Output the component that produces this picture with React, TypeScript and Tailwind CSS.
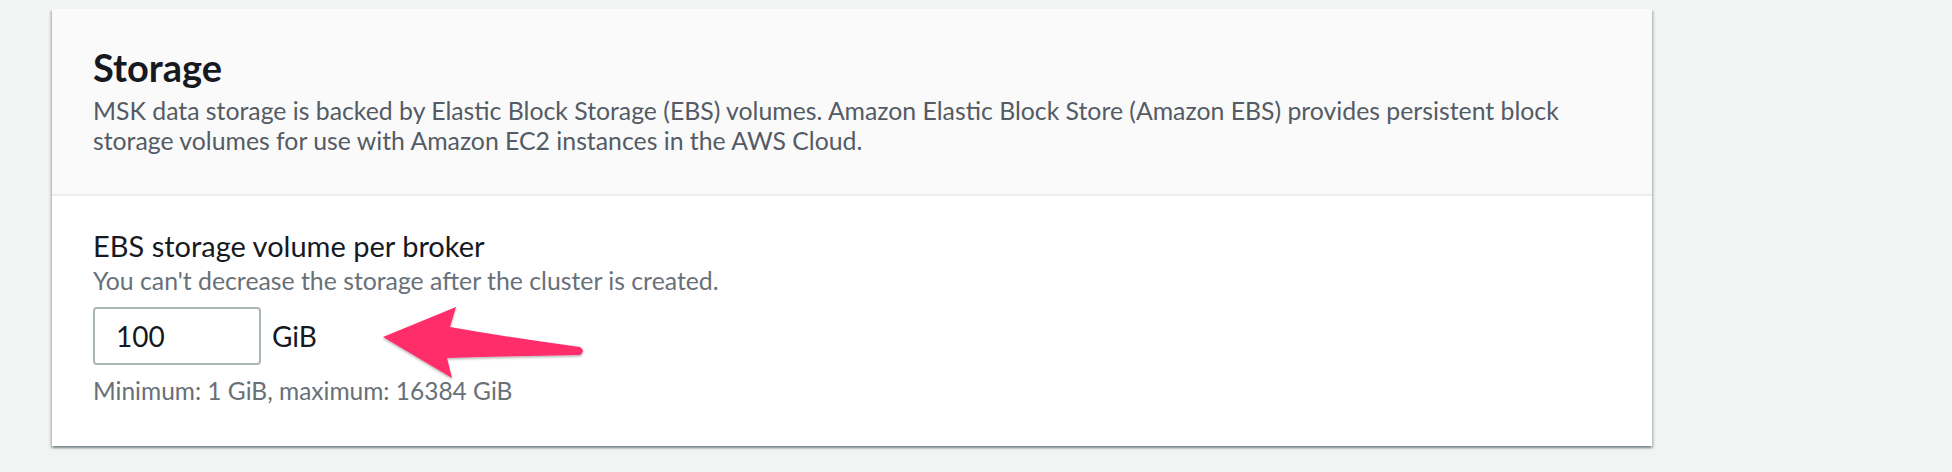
import React from 'react';

const font = { fontFamily: 'Lato, "Open Sans", Arial, sans-serif' };

const PinkArrow = () => (
  <svg
    className="absolute left-[370px] top-[295px] pointer-events-none"
    width="230"
    height="95"
    viewBox="370 295 230 95"
  >
    <defs>
      <filter id="arrowShadow" x="-10%" y="-20%" width="130%" height="150%">
        <feDropShadow dx="0" dy="1.5" stdDeviation="1.2" floodColor="#000" floodOpacity="0.3" />
      </filter>
    </defs>
    <path
      d="M383 337 L456 307 L450 327 Q512 338 580 347 Q586 351 580 355 Q512 356 447 358 L452 378 Z"
      fill="#ff2d6b"
      filter="url(#arrowShadow)"
    />
  </svg>
);

export default function App() {
  return (
    <div className="relative h-[472px] w-full bg-[#f2f3f3] pt-[9px]" style={font}>
      <div className="ml-[52px] w-[1600px] bg-white shadow-[0_2px_2px_0_rgba(0,28,36,0.3),2px_2px_2px_0_rgba(0,28,36,0.15),-2px_2px_2px_0_rgba(0,28,36,0.15)]">
        {/* Header */}
        <div className="bg-[#fafafa] border-b-2 border-[#eaeded] pl-[41px] pr-[41px] pt-[36px] pb-[38px]">
          <h2 className="text-[38px] leading-[44px] font-bold text-[#16191f]">Storage</h2>
          <p className="mt-[7px] text-[24.8px] leading-[30px] text-[#545b64]">
            MSK data storage is backed by Elastic Block Storage (EBS) volumes. Amazon Elastic Block Store (Amazon EBS)
            provides persistent block storage volumes for use with Amazon EC2 instances in the AWS Cloud.
          </p>
        </div>

        {/* Body */}
        <div className="pl-[41px] pr-[41px] pt-[33px] pb-[41px]">
          <div className="text-[29px] leading-[34px] text-[#16191f]">EBS storage volume per broker</div>
          <div className="mt-[4px] text-[24.8px] leading-[28px] text-[#687078]">
            You can't decrease the storage after the cluster is created.
          </div>
          <div className="mt-[12px] flex items-center gap-[11px]">
            <div className="flex h-[58px] w-[168px] items-center rounded-[4px] border-2 border-[#aab7b8] bg-white pl-[21px] text-[28px] leading-[34px] text-[#16191f]">
              100
            </div>
            <span className="text-[28px] leading-[34px] text-[#16191f]">GiB</span>
          </div>
          <div className="mt-[12px] text-[24.5px] leading-[28px] text-[#687078]">
            Minimum: 1 GiB, maximum: 16384 GiB
          </div>
        </div>
      </div>
      <PinkArrow />
    </div>
  );
}
